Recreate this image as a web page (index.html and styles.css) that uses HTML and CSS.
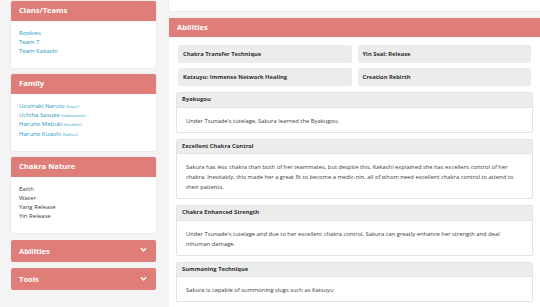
FILE: index.html
```html
<!DOCTYPE html>
<html>
<head>
<meta charset="utf-8">
<link rel="stylesheet" href="styles.css">
</head>
<body>
<div class="page">
  <aside class="side">
    <section class="card">
      <h2 class="card-head">Clans/Teams</h2>
      <ul class="card-list">
        <li><a class="link">Rookies</a></li>
        <li><a class="link">Team 7</a></li>
        <li><a class="link">Team Kakashi</a></li>
      </ul>
    </section>
    <section class="card">
      <h2 class="card-head">Family</h2>
      <ul class="card-list">
        <li><a class="link">Uzumaki Naruto</a> <small class="rel">(lover)</small></li>
        <li><a class="link">Uchiha Sasuke</a> <small class="rel">(infatuation)</small></li>
        <li><a class="link">Haruno Mebuki</a> <small class="rel">(mother)</small></li>
        <li><a class="link">Haruno Kizashi</a> <small class="rel">(father)</small></li>
      </ul>
    </section>
    <section class="card">
      <h2 class="card-head">Chakra Nature</h2>
      <ul class="card-list plain">
        <li>Earth</li>
        <li>Water</li>
        <li>Yang Release</li>
        <li>Yin Release</li>
      </ul>
    </section>
    <section class="card collapsed">
      <h2 class="card-head toggle">Abilities
        <svg class="chev" viewBox="0 0 8 5" width="7" height="5"><path d="M1 1 L4 4 L7 1" fill="none" stroke="#fff" stroke-width="1.5"/></svg>
      </h2>
    </section>
    <section class="card collapsed">
      <h2 class="card-head toggle">Tools
        <svg class="chev" viewBox="0 0 8 5" width="7" height="5"><path d="M1 1 L4 4 L7 1" fill="none" stroke="#fff" stroke-width="1.5"/></svg>
      </h2>
    </section>
  </aside>
  <main class="main">
    <div class="top-card"></div>
    <section class="panel">
      <h2 class="panel-head">Abilities</h2>
      <div class="panel-body">
        <div class="pills">
          <div class="pill">Chakra Transfer Technique</div>
          <div class="pill">Yin Seal: Release</div>
          <div class="pill">Katsuyu: Immense Network Healing</div>
          <div class="pill">Creation Rebirth</div>
        </div>
        <div class="ability">
          <div class="ability-head">Byakugou</div>
          <p class="ability-body">Under Tsunade's tutelage, Sakura learned the Byakugou.</p>
        </div>
        <div class="ability">
          <div class="ability-head">Excellent Chakra Control</div>
          <p class="ability-body">Sakura has less chakra than both of her teammates, but despite this, Kakashi explained she has excellent control of her chakra. Inevitably, this made her a great fit to become a medic-nin, all of whom need excellent chakra control to attend to their patients.</p>
        </div>
        <div class="ability">
          <div class="ability-head">Chakra Enhanced Strength</div>
          <p class="ability-body">Under Tsunade's tutelage and due to her excellent chakra control, Sakura can greatly enhance her strength and deal inhuman damage.</p>
        </div>
        <div class="ability">
          <div class="ability-head">Summoning Technique</div>
          <p class="ability-body">Sakura is capable of summoning slugs such as Katsuyu</p>
        </div>
      </div>
    </section>
  </main>
</div>
</body>
</html>
```

FILE: styles.css
```css
html, body {
  margin: 0;
  padding: 0;
  overflow: hidden;
}
body {
  background: #f4f4f4;
  font-family: "Open Sans", "Liberation Sans", sans-serif;
  color: #3a3a3a;
  width: 540px;
  height: 307px;
}
.page {
  display: flex;
  align-items: flex-start;
  padding-left: 11px;
  gap: 13px;
}
.side {
  width: 145px;
  flex: none;
  display: flex;
  flex-direction: column;
  gap: 6.5px;
  padding-top: 1px;
}
.card {
  background: #fff;
  border-radius: 2px;
  box-shadow: 0 0 0 1px #ebebeb;
  overflow: hidden;
}
.card-head {
  margin: 0;
  background: #df7e79;
  color: #fff;
  font-size: 7.6px;
  font-weight: 700;
  height: 19.5px;
  line-height: 19.5px;
  padding: 0 8px;
  display: flex;
  align-items: center;
  justify-content: space-between;
}
.collapsed {
  box-shadow: none;
}
.toggle {
  height: 22px;
  line-height: 22px;
}
.chev {
  display: block;
  margin-right: 1px;
  margin-top: -2px;
}
.card-list {
  list-style: none;
  margin: 0;
  padding: 8px 8px 11.5px;
  font-size: 6px;
  line-height: 9.3px;
}
.link {
  color: #2299c2;
}
.rel {
  font-size: 4.3px;
  color: #2299c2;
}
.plain {
  color: #3a3a3a;
}
.main {
  width: 371px;
  flex: none;
  display: flex;
  flex-direction: column;
  gap: 7px;
}
.top-card {
  height: 11px;
  background: #fff;
  box-shadow: 0 0 0 1px #ebebeb;
}
.panel {
  background: #fff;
  min-height: 300px;
}
.panel-head {
  margin: 0;
  background: #df7e79;
  color: #fff;
  font-size: 7.6px;
  font-weight: 700;
  height: 19px;
  line-height: 19px;
  padding: 0 8px;
}
.panel-body {
  padding: 8px 7px;
  display: flex;
  flex-direction: column;
  gap: 6px;
}
.pills {
  display: grid;
  grid-template-columns: 1fr 1fr;
  gap: 5px 6px;
  padding: 0 2px;
}
.pill {
  background: #ececec;
  border-radius: 2px;
  height: 18px;
  line-height: 18px;
  padding: 0 5px;
  font-size: 5.8px;
  font-weight: 700;
  color: #2f2f2f;
}
.ability {
  border: 1px solid #e2e2e2;
  border-radius: 2px;
  overflow: hidden;
}
.ability-head {
  background: #ececec;
  border-bottom: 1px solid #e2e2e2;
  height: 13.5px;
  line-height: 13.5px;
  padding: 0 5px;
  font-size: 5.8px;
  font-weight: 700;
  color: #2f2f2f;
}
.ability-body {
  margin: 0;
  padding: 8px 9px 6px;
  font-size: 5.8px;
  line-height: 10px;
  color: #3a3a3a;
}
```
